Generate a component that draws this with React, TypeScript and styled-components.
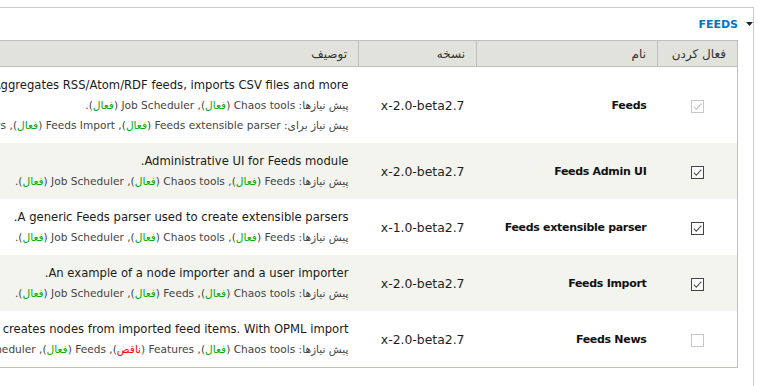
import React from "react";
import styled, { createGlobalStyle } from "styled-components";

const GlobalStyle = createGlobalStyle`
  html, body { margin: 0; padding: 0; background: #fff; }
  body { font-family: "DejaVu Sans", sans-serif; color: #333; }
`;

const Page = styled.div`
  direction: rtl;
  width: 762px;
  height: 386px;
  overflow: hidden;
  padding: 7px 8px 0 0;
  box-sizing: border-box;
`;

const Fieldset = styled.section`
  width: 1100px;
  min-height: 420px;
  border: 1px solid #ccc;
  box-sizing: border-box;
  padding: 0;
`;

const Legend = styled.div`
  display: flex;
  align-items: center;
  gap: 8px;
  height: 32px;
`;

const Arrow = styled.svg`
  display: block;
  width: 7px;
  height: 4px;
`;

const LegendText = styled.span`
  font-family: "DejaVu Sans", sans-serif;
  font-weight: bold;
  font-size: 11px;
  color: #0074bd;
  text-transform: uppercase;
`;

const Table = styled.table`
  border-collapse: collapse;
  table-layout: fixed;
  width: 1000px;
  margin-right: 15px;
  border: 1px solid #bebfb9;
`;

const Th = styled.th<{ $w?: number }>`
  ${(p) => (p.$w ? `width: ${p.$w}px;` : "")}
  height: 26px;
  padding: 0 11px;
  box-sizing: border-box;
  text-align: right;
  font-weight: normal;
  font-size: 12px;
  color: #333;
  background: #e1e2dc;
  border: 1px solid #bebfb9;
`;

const Row = styled.tr<{ $even?: boolean }>`
  background: ${(p) => (p.$even ? "#f3f4ee" : "#fff")};
`;

const CheckCell = styled.td`
  text-align: center;
  vertical-align: middle;
  padding: 0;
`;

const NameCell = styled.td`
  text-align: right;
  vertical-align: middle;
  padding: 0 11px;
  font-weight: bold;
  font-size: 11px;
  letter-spacing: -0.3px;
  color: #111;
`;

const VersionCell = styled.td`
  text-align: right;
  vertical-align: middle;
  padding: 0 12px;
  font-size: 12.4px;
  color: #1e1e1e;
`;

const DescCell = styled.td`
  text-align: right;
  vertical-align: top;
  padding: 8px 10px;
`;

const Desc = styled.div`
  font-size: 11.6px;
  line-height: 20px;
  color: #1a1a1a;
  white-space: nowrap;
`;

const Req = styled.div`
  font-size: 10.6px;
  line-height: 20px;
  color: #444;
  white-space: nowrap;
`;

const Status = styled.span<{ $missing?: boolean }>`
  color: ${(p) => (p.$missing ? "#f00" : "#0a0")};
`;

const Box = styled.span<{ $disabled?: boolean }>`
  display: inline-block;
  vertical-align: middle;
  width: 13px;
  height: 13px;
  box-sizing: border-box;
  background: #fff;
  border: 1px solid ${(p) => (p.$disabled ? "#c8c8c8" : "#444")};
  svg {
    display: block;
  }
`;

function Checkbox({ checked, disabled }: { checked: boolean; disabled?: boolean }) {
  return (
    <Box $disabled={disabled}>
      {checked && (
        <svg width="11" height="11" viewBox="0 0 11 11">
          <path
            d="M1.8 5.6 L4.3 8.2 L9.4 2.6"
            fill="none"
            stroke={disabled ? "#c0c0c0" : "#555"}
            strokeWidth="1.1"
          />
        </svg>
      )}
    </Box>
  );
}

type Dep = { name: string; missing?: boolean; disabled?: boolean };

function DepList({ label, deps }: { label: string; deps: Dep[] }) {
  return (
    <Req>
      {label}{" "}
      {deps.map((d, i) => (
        <React.Fragment key={d.name}>
          {d.name} (
          <Status $missing={d.missing || d.disabled}>
            {d.missing ? "ناقص" : d.disabled ? "غیرفعال" : "فعال"}
          </Status>
          ){i < deps.length - 1 ? ", " : "."}
        </React.Fragment>
      ))}
    </Req>
  );
}

type Mod = {
  name: string;
  version: string;
  desc: string;
  requires: Dep[];
  requiredBy?: Dep[];
  checked: boolean;
  disabled?: boolean;
};

const modules: Mod[] = [
  {
    name: "Feeds",
    version: "7.x-2.0-beta2",
    desc: "Aggregates RSS/Atom/RDF feeds, imports CSV files and more.",
    requires: [{ name: "Chaos tools" }, { name: "Job Scheduler" }],
    requiredBy: [
      { name: "Feeds extensible parser" },
      { name: "Feeds Import" },
      { name: "Feeds News", disabled: true },
    ],
    checked: true,
    disabled: true,
  },
  {
    name: "Feeds Admin UI",
    version: "7.x-2.0-beta2",
    desc: "Administrative UI for Feeds module.",
    requires: [{ name: "Feeds" }, { name: "Chaos tools" }, { name: "Job Scheduler" }],
    checked: true,
  },
  {
    name: "Feeds extensible parser",
    version: "7.x-1.0-beta2",
    desc: "A generic Feeds parser used to create extensible parsers.",
    requires: [{ name: "Feeds" }, { name: "Chaos tools" }, { name: "Job Scheduler" }],
    checked: true,
  },
  {
    name: "Feeds Import",
    version: "7.x-2.0-beta2",
    desc: "An example of a node importer and a user importer.",
    requires: [{ name: "Chaos tools" }, { name: "Feeds" }, { name: "Job Scheduler" }],
    checked: true,
  },
  {
    name: "Feeds News",
    version: "7.x-2.0-beta2",
    desc: "A news aggregator built with feeds, creates nodes from imported feed items. With OPML import.",
    requires: [
      { name: "Chaos tools" },
      { name: "Features", missing: true },
      { name: "Feeds" },
      { name: "Job Scheduler" },
      { name: "Views" },
    ],
    checked: false,
    disabled: true,
  },
];

export default function App() {
  return (
    <>
      <GlobalStyle />
      <Page>
        <Fieldset>
          <Legend>
            <Arrow viewBox="0 0 7 4">
              <polygon points="0,0 7,0 3.5,4" fill="#222" />
            </Arrow>
            <LegendText>Feeds</LegendText>
          </Legend>
          <Table>
            <thead>
              <tr>
                <Th $w={80}>فعال کردن</Th>
                <Th $w={181}>نام</Th>
                <Th $w={118}>نسخه</Th>
                <Th>توصیف</Th>
              </tr>
            </thead>
            <tbody>
              {modules.map((m, i) => (
                <Row key={m.name} $even={i % 2 === 1}>
                  <CheckCell>
                    <Checkbox checked={m.checked} disabled={m.disabled} />
                  </CheckCell>
                  <NameCell>{m.name}</NameCell>
                  <VersionCell>{m.version}</VersionCell>
                  <DescCell>
                    <Desc>{m.desc}</Desc>
                    <DepList label="پیش نیازها:" deps={m.requires} />
                    {m.requiredBy && <DepList label="پیش نیاز برای:" deps={m.requiredBy} />}
                  </DescCell>
                </Row>
              ))}
            </tbody>
          </Table>
        </Fieldset>
      </Page>
    </>
  );
}
